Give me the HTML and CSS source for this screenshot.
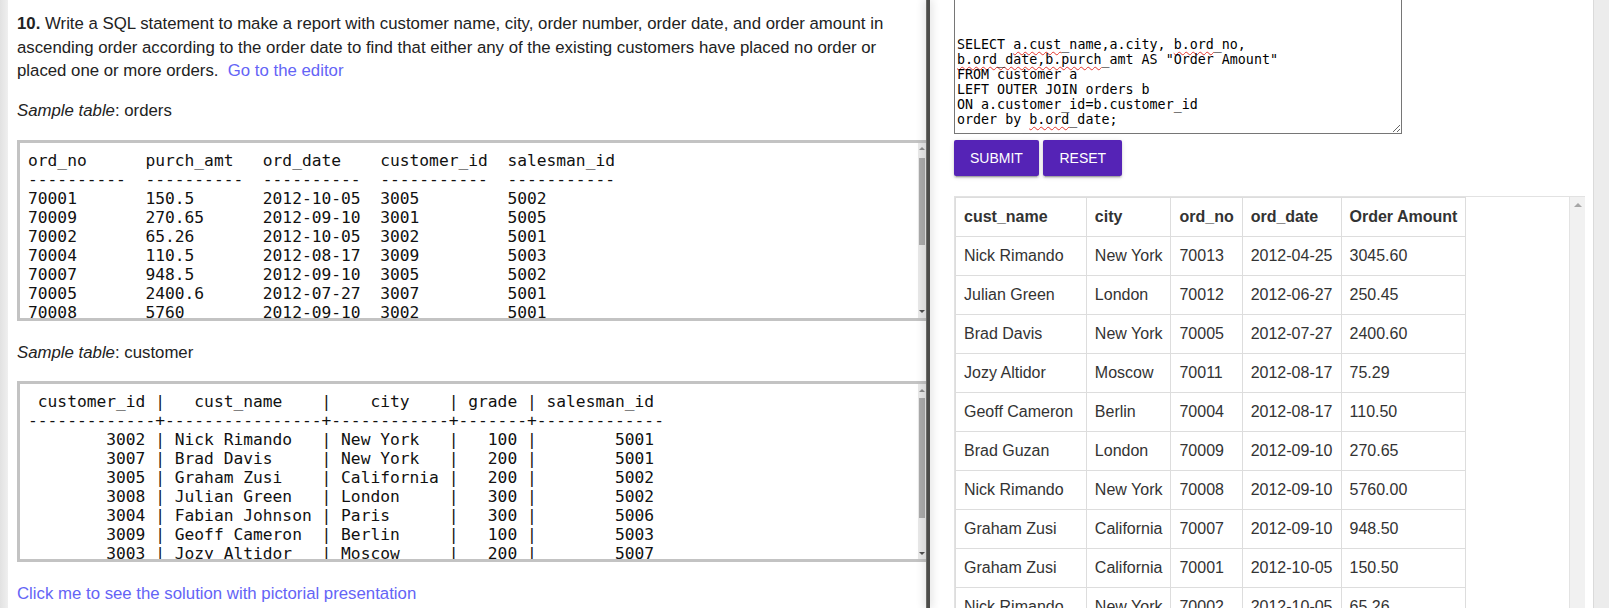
FILE: index.html
```html
<!DOCTYPE html>
<html lang="en">
<head>
<meta charset="utf-8">
<title>SQL Exercise 10</title>
<link rel="stylesheet" href="styles.css">
</head>
<body>
<div class="app">
  <div class="edge"></div>
  <section class="left">
    <p class="q"><b>10.</b> Write a SQL statement to make a report with customer name, city, order number, order date, and order amount in ascending order according to the order date to find that either any of the existing customers have placed no order or placed one or more orders.&nbsp; <a class="lnk" href="#editor">Go to the editor</a></p>
    <p class="cap"><i>Sample table</i>: orders</p>
    <div class="sample-box">
<pre class="sample">ord_no      purch_amt   ord_date    customer_id  salesman_id
----------  ----------  ----------  -----------  -----------
70001       150.5       2012-10-05  3005         5002
70009       270.65      2012-09-10  3001         5005
70002       65.26       2012-10-05  3002         5001
70004       110.5       2012-08-17  3009         5003
70007       948.5       2012-09-10  3005         5002
70005       2400.6      2012-07-27  3007         5001
70008       5760        2012-09-10  3002         5001
70010       1983.43     2012-10-10  3004         5006
70003       2480.4      2012-10-10  3009         5003
70012       250.45      2012-06-27  3008         5002
70011       75.29       2012-08-17  3003         5007
70013       3045.6      2012-04-25  3002         5001</pre>
      <div class="vbar">
        <div class="arr up"></div>
        <div class="track"><div class="thumb" style="margin-top:3px;height:87px"></div></div>
        <div class="arr down"></div>
      </div>
    </div>
    <p class="cap"><i>Sample table</i>: customer</p>
    <div class="sample-box">
<pre class="sample"> customer_id |   cust_name    |    city    | grade | salesman_id
-------------+----------------+------------+-------+-------------
        3002 | Nick Rimando   | New York   |   100 |        5001
        3007 | Brad Davis     | New York   |   200 |        5001
        3005 | Graham Zusi    | California |   200 |        5002
        3008 | Julian Green   | London     |   300 |        5002
        3004 | Fabian Johnson | Paris      |   300 |        5006
        3009 | Geoff Cameron  | Berlin     |   100 |        5003
        3003 | Jozy Altidor   | Moscow     |   200 |        5007
        3001 | Brad Guzan     | London     |       |        5005</pre>
      <div class="vbar">
        <div class="arr up"></div>
        <div class="track"><div class="thumb" style="margin-top:2px;height:120px"></div></div>
        <div class="arr down"></div>
      </div>
    </div>
    <p class="last"><a class="lnk" href="#solution">Click me to see the solution with pictorial presentation</a></p>
  </section>
  <div class="divider"></div>
  <section class="right" id="editor">
    <div class="editor">SELECT <span class="sp">a.cust</span>_name,a.city, <span class="sp">b.ord</span>_no,
<span class="sp">b.ord_date,b.purch</span>_amt AS "Order Amount"
FROM customer a
LEFT OUTER JOIN orders b
ON a.customer_id=b.customer_id
order by <span class="sp">b.ord</span>_date;</div>
    <div class="btns">
      <button class="btn" type="button">SUBMIT</button>
      <button class="btn" type="button">RESET</button>
    </div>
    <div class="result">
      <div class="table-wrap">
        <table>
          <thead>
            <tr><th>cust_name</th><th>city</th><th>ord_no</th><th>ord_date</th><th>Order Amount</th></tr>
          </thead>
          <tbody>
            <tr><td>Nick Rimando</td><td>New York</td><td>70013</td><td>2012-04-25</td><td>3045.60</td></tr>
            <tr><td>Julian Green</td><td>London</td><td>70012</td><td>2012-06-27</td><td>250.45</td></tr>
            <tr><td>Brad Davis</td><td>New York</td><td>70005</td><td>2012-07-27</td><td>2400.60</td></tr>
            <tr><td>Jozy Altidor</td><td>Moscow</td><td>70011</td><td>2012-08-17</td><td>75.29</td></tr>
            <tr><td>Geoff Cameron</td><td>Berlin</td><td>70004</td><td>2012-08-17</td><td>110.50</td></tr>
            <tr><td>Brad Guzan</td><td>London</td><td>70009</td><td>2012-09-10</td><td>270.65</td></tr>
            <tr><td>Nick Rimando</td><td>New York</td><td>70008</td><td>2012-09-10</td><td>5760.00</td></tr>
            <tr><td>Graham Zusi</td><td>California</td><td>70007</td><td>2012-09-10</td><td>948.50</td></tr>
            <tr><td>Graham Zusi</td><td>California</td><td>70001</td><td>2012-10-05</td><td>150.50</td></tr>
            <tr><td>Nick Rimando</td><td>New York</td><td>70002</td><td>2012-10-05</td><td>65.26</td></tr>
            <tr><td>Fabian Johnson</td><td>Paris</td><td>70010</td><td>2012-10-10</td><td>1983.43</td></tr>
            <tr><td>Geoff Cameron</td><td>Berlin</td><td>70003</td><td>2012-10-10</td><td>2480.40</td></tr>
          </tbody>
        </table>
      </div>
      <div class="vbar wide">
        <div class="arr up"></div>
        <div class="track"></div>
      </div>
    </div>
  </section>
  <div class="pagebar"></div>
</div>
</body>
</html>
```
FILE: styles.css
```css
html, body {
  margin: 0;
  padding: 0;
  height: 608px;
  overflow: hidden;
  background: #fff;
}

.app {
  display: flex;
  height: 608px;
  font-family: "Liberation Sans", Arial, sans-serif;
  color: #222;
}

.edge {
  flex: 0 0 8px;
  background: linear-gradient(to right, #e2e2e2, #efefef);
}

/* ---------- left pane ---------- */

.left {
  flex: 0 0 918px;
  box-sizing: border-box;
  padding: 12px 0 0 9px;
  overflow: hidden;
  font-size: 16.8px;
  line-height: 1.4;
}

.left p {
  margin: 0 0 16.5px;
}

.left p.cap {
  margin-bottom: 17px;
}

.lnk {
  color: #6464f6;
  text-decoration: none;
}

.sample-box {
  box-sizing: border-box;
  display: flex;
  width: calc(100% + 3px);
  height: 181px;
  margin: 0 0 20px;
  border: 3px solid #c3c3c3;
  overflow: hidden;
}

.sample {
  flex: 1 1 auto;
  min-width: 0;
  margin: 0;
  padding: 8px;
  font-family: "DejaVu Sans Mono", monospace;
  font-size: 16.25px;
  line-height: normal;
  color: #111;
  overflow: hidden;
}

/* scrollbars drawn as elements */

.vbar {
  flex: 0 0 8px;
  display: flex;
  flex-direction: column;
  background: #e9e9e9;
}

.vbar .arr {
  flex: 0 0 12px;
  display: flex;
  align-items: center;
  justify-content: center;
}

.vbar .arr::before {
  content: "";
  width: 0;
  height: 0;
  border-left: 3px solid transparent;
  border-right: 3px solid transparent;
}

.vbar .arr.up::before {
  border-bottom: 3px solid #8c8c8c;
}

.vbar .arr.down::before {
  border-top: 3px solid #505050;
}

.vbar .track {
  flex: 1 1 auto;
  display: flex;
  flex-direction: column;
  align-items: center;
}

.vbar .thumb {
  width: 6px;
  background: #ababab;
}

.vbar.wide {
  flex: 0 0 16px;
  box-sizing: border-box;
  background: #f1f1f1;
  border-left: 1px solid #e3e3e3;
}

.vbar.wide .arr {
  flex-basis: 16px;
}

.vbar.wide .arr::before {
  border-left-width: 4px;
  border-right-width: 4px;
}

.vbar.wide .arr.up::before {
  border-bottom: 4px solid #a6a6a6;
}

/* ---------- divider ---------- */

.divider {
  flex: 0 0 4px;
  position: relative;
  z-index: 2;
  background: #4c4c4a;
  border-left: 1px solid #6b6b68;
  box-sizing: border-box;
  box-shadow: 0 0 10px 1px rgba(0, 0, 0, 0.16);
}

/* ---------- right pane ---------- */

.right {
  flex: 1 1 auto;
  min-width: 0;
  display: flex;
  flex-direction: column;
  align-items: flex-start;
  padding: 0 8px 0 24px;
  overflow: hidden;
}

.right > * {
  flex-shrink: 0;
}

.editor {
  box-sizing: border-box;
  width: 448px;
  height: 145px;
  margin-top: -11px;
  padding: 47px 2px 2px 2px;
  border: 1px solid #767676;
  font-family: "DejaVu Sans Mono", monospace;
  font-size: 13.333px;
  line-height: 15px;
  color: #000;
  white-space: pre;
  resize: both;
  overflow: hidden;
}

.sp {
  text-decoration: underline wavy #e2342c;
  text-decoration-thickness: 1px;
  text-underline-offset: 2px;
  text-decoration-skip-ink: none;
}

.btns {
  display: flex;
  gap: 4.6px;
  margin-top: 6px;
}

.btn {
  height: 36px;
  padding: 0 16px;
  border: none;
  border-radius: 2px;
  background: #5523b6;
  color: #fff;
  font-family: "Liberation Sans", Arial, sans-serif;
  font-size: 14px;
  box-shadow: 0 2px 2px 0 rgba(0, 0, 0, 0.14), 0 3px 1px -2px rgba(0, 0, 0, 0.2), 0 1px 5px 0 rgba(0, 0, 0, 0.12);
}

.result {
  box-sizing: border-box;
  display: flex;
  width: 631px;
  height: 440px;
  margin-top: 20px;
  border-top: 1px solid #e2e2e2;
  border-left: 1px solid #e2e2e2;
  overflow: hidden;
}

.table-wrap {
  flex: 1 1 auto;
  min-width: 0;
  overflow: hidden;
}

.result table {
  border-collapse: collapse;
  border: 1px solid #ddd;
  font-size: 16px;
  line-height: 22px;
  color: #333;
}

.result th,
.result td {
  padding: 8px;
  border: 1px solid #ddd;
  text-align: left;
  white-space: nowrap;
}

.result th {
  font-weight: bold;
}

.pagebar {
  flex: 0 0 16px;
  box-sizing: border-box;
  background: #ececec;
  border-left: 1px solid #dadada;
}
```
